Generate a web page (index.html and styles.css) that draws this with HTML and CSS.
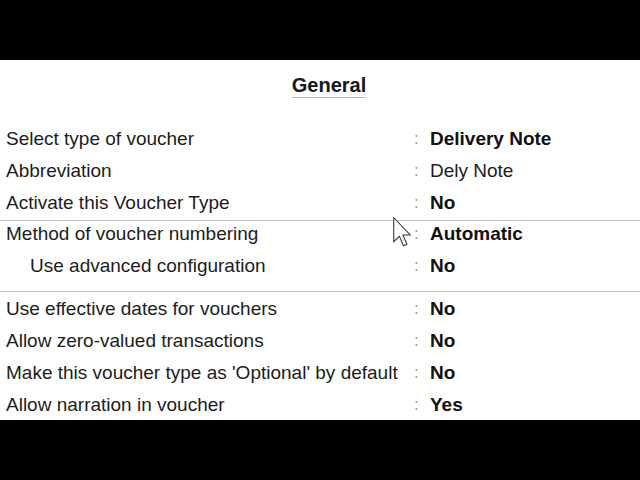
FILE: index.html
```html
<!DOCTYPE html>
<html>
<head>
<meta charset="utf-8">
<link rel="stylesheet" href="styles.css">
</head>
<body>
<div class="bar"></div>
<main class="panel">
  <div class="title-wrap"><span class="title">General</span></div>
  <div class="group first">
    <div class="row"><span class="label">Select type of voucher</span><span class="colon">:</span><span class="value bold">Delivery Note</span></div>
    <div class="row"><span class="label">Abbreviation</span><span class="colon">:</span><span class="value">Dely Note</span></div>
    <div class="row"><span class="label">Activate this Voucher Type</span><span class="colon">:</span><span class="value bold">No</span></div>
  </div>
  <div class="sep sep1"></div>
  <div class="group">
    <div class="row"><span class="label">Method of voucher numbering</span><span class="colon">:</span><span class="value bold">Automatic</span></div>
    <div class="row"><span class="label indent">Use advanced configuration</span><span class="colon">:</span><span class="value bold">No</span></div>
  </div>
  <div class="sep sep2"></div>
  <div class="group">
    <div class="row"><span class="label">Use effective dates for vouchers</span><span class="colon">:</span><span class="value bold">No</span></div>
    <div class="row"><span class="label">Allow zero-valued transactions</span><span class="colon">:</span><span class="value bold">No</span></div>
    <div class="row"><span class="label">Make this voucher type as 'Optional' by default</span><span class="colon">:</span><span class="value bold">No</span></div>
    <div class="row"><span class="label">Allow narration in voucher</span><span class="colon">:</span><span class="value bold">Yes</span></div>
  </div>
  <svg class="cursor" width="18" height="30" viewBox="0 0 12 20">
    <path d="M0.5 0.5 L0.5 16.5 L4.3 12.9 L7 19.2 L9.3 18.2 L6.6 12 L11.5 12 Z" fill="#fff" stroke="#333" stroke-width="0.7" stroke-linejoin="miter"/>
  </svg>
</main>
<div class="bar"></div>
</body>
</html>
```
FILE: styles.css
```css
html, body {
  margin: 0;
  padding: 0;
  background: #000;
}
body {
  width: 640px;
  height: 480px;
  overflow: hidden;
  font-family: "Liberation Sans", Arial, sans-serif;
}
.bar {
  height: 60px;
  background: #000;
}
.panel {
  position: relative;
  height: 360px;
  overflow: hidden;
  background: #fff;
  color: #1c1c1c;
}
.title-wrap {
  padding-top: 13px;
  text-align: center;
  padding-left: 18px;
}
.title {
  display: inline-block;
  font-size: 20px;
  font-weight: bold;
  line-height: 24px;
  color: #161622;
  border-bottom: 1px solid #b8b8b8;
}
.group.first {
  margin-top: 25px;
}
.row {
  display: flex;
  height: 32px;
  line-height: 32px;
  font-size: 19px;
  white-space: nowrap;
}
.label {
  width: 408px;
  padding-left: 6px;
  box-sizing: border-box;
  flex: none;
  width: 414px;
}
.label.indent {
  padding-left: 30px;
}
.colon {
  width: 16px;
  flex: none;
  color: #9a9a9a;
  font-size: 17px;
}
.value {
  color: #1c1c1c;
}
.value.bold {
  font-weight: bold;
  color: #111;
}
.sep {
  height: 1px;
  background: #c4c4c4;
}
.sep1 {
  margin-top: 1px;
  margin-bottom: -3px;
}
.sep2 {
  margin-top: 9px;
  margin-bottom: 1px;
}
.cursor {
  position: absolute;
  left: 393px;
  top: 157px;
}
```
